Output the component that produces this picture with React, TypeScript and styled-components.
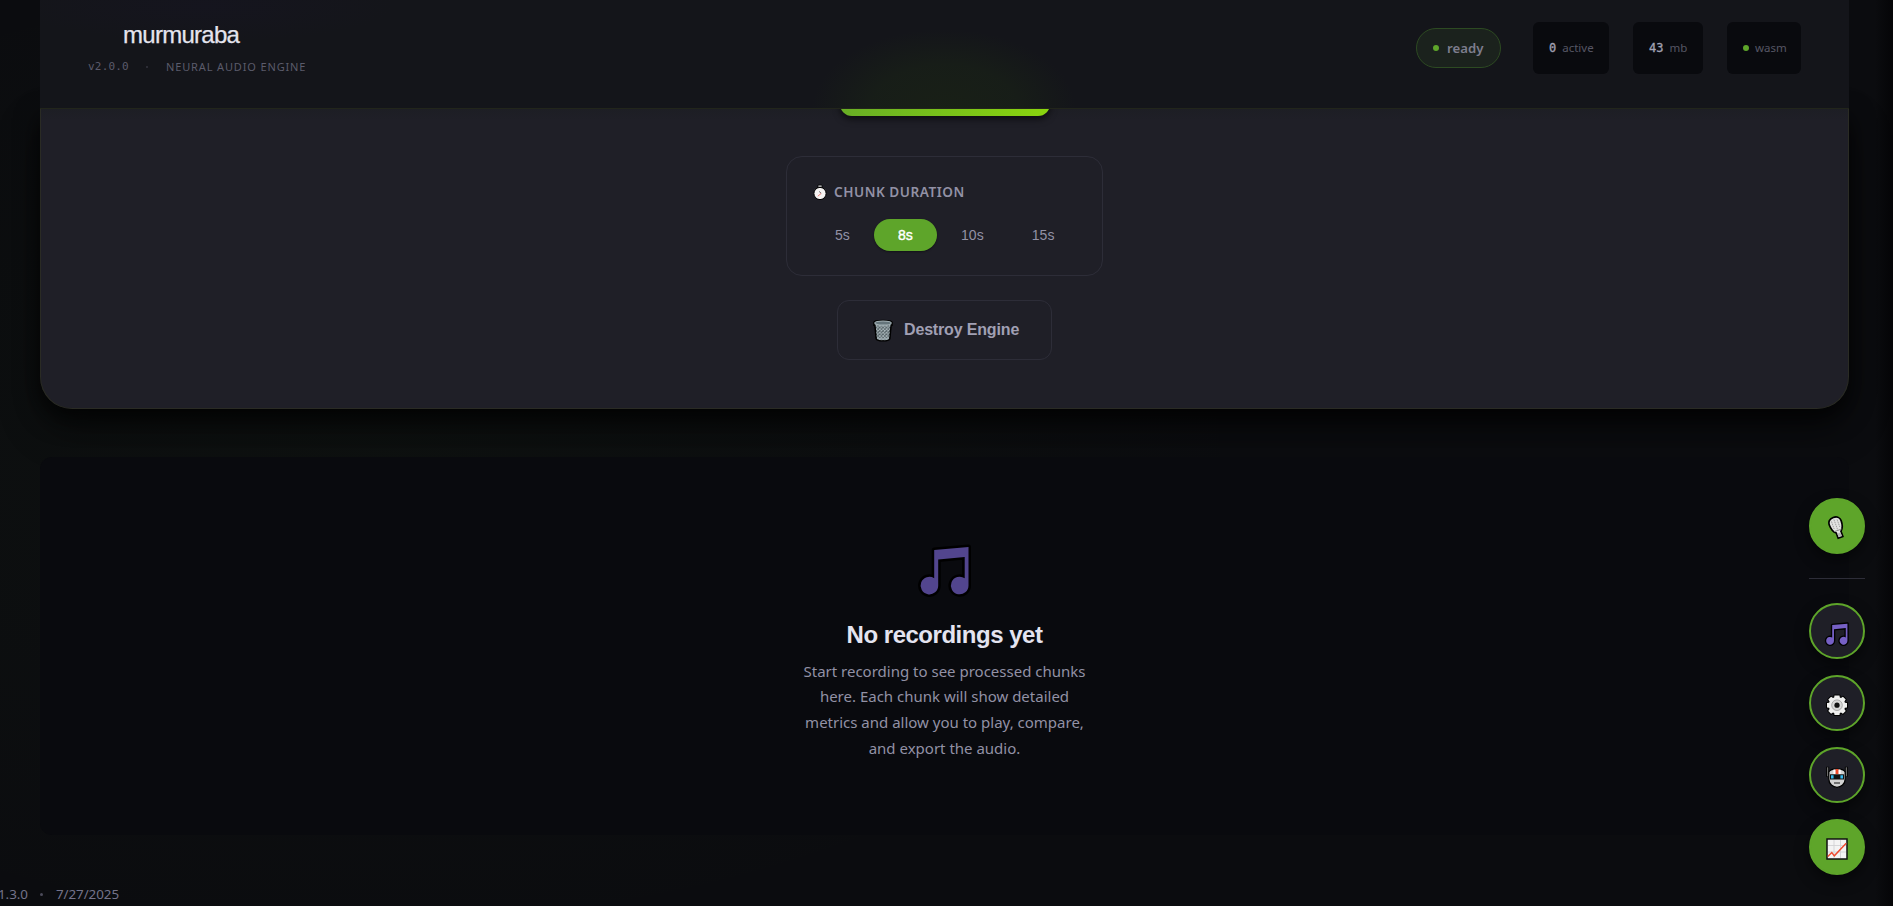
import React from "react";
import styled, { createGlobalStyle, css } from "styled-components";

const UI = `"Noto Sans", "Open Sans", sans-serif`;
const HEAD = `"Liberation Sans", Arial, sans-serif`;
const MONO = `"DejaVu Sans Mono", "Liberation Mono", monospace`;

const GlobalStyle = createGlobalStyle`
  *, *::before, *::after { box-sizing: border-box; }
  html, body { margin: 0; background: #0a0b0e; }
  body { overflow: hidden; font-family: ${UI}; }
  button { border: 0; background: none; margin: 0; padding: 0; }
  svg { display: block; }
`;

const Page = styled.div`
  position: relative;
  height: 906px;
  padding: 0 44px 0 40px;
  overflow: hidden;
  display: flex;
  flex-direction: column;
  background:
    linear-gradient(270deg, #050507 0, rgba(5, 5, 7, 0) 18px),
    radial-gradient(ellipse 900px 500px at 20% 50%, rgba(93, 163, 41, 0.03), transparent),
    #0b0c0f;
`;

const Header = styled.header`
  position: relative;
  z-index: 2;
  flex: none;
  height: 109px;
  padding: 0 48px;
  display: flex;
  justify-content: space-between;
  border-bottom: 1px solid #22251b;
  background:
    radial-gradient(ellipse 132px 80px at 904px 109px, rgba(30, 44, 18, 0.46) 0, rgba(29, 44, 20, 0.36) 55%, transparent 100%),
    radial-gradient(ellipse 190px 36px at 165px 6px, rgba(24, 20, 42, 0.26), transparent),
    #14151a;
`;

const Brand = styled.div`
  padding-top: 20px;
`;

const Logo = styled.h1`
  margin: 0 0 0 35px;
  font: 400 24px/30px ${HEAD};
  letter-spacing: -0.72px;
  color: #e4e4ee;
  -webkit-text-stroke: 0.25px #e4e4ee;
`;

const Tagline = styled.div`
  display: flex;
  align-items: center;
  height: 16px;
  margin-top: 9px;
  color: #5b5b6b;
`;

const Version = styled.span`
  width: 58px;
  font: 11px/16px ${MONO};
  letter-spacing: 0.2px;
`;

const TagDot = styled.i`
  width: 2px;
  height: 2px;
  border-radius: 50%;
  background: #34343f;
  margin-right: 18px;
`;

const Engine = styled.span`
  font: 11px/16px ${UI};
  letter-spacing: 0.86px;
`;

const Status = styled.div`
  display: flex;
  align-items: flex-start;
  padding-top: 22px;
`;

const Dot = styled.i`
  flex: none;
  width: 6px;
  height: 6px;
  border-radius: 50%;
  background: #5ea52a;
`;

const Ready = styled.div`
  width: 85px;
  height: 40px;
  margin: 6px 32px 0 0;
  padding-left: 16px;
  display: flex;
  align-items: center;
  gap: 8px;
  border: 1px solid #2d4a22;
  border-radius: 20px;
  background: #1b221d;
  color: #7d7d8d;
  font: 600 13.2px/18px ${UI};
`;

const Stat = styled.div<{ $w: number }>`
  width: ${(p) => p.$w}px;
  height: 52px;
  padding-left: 16px;
  display: flex;
  align-items: center;
  gap: 6px;
  border-radius: 6px;
  background: #090a0e;
  color: #565664;
  font: 11.5px/16px ${UI};
  & + & { margin-left: 24px; }
  b {
    font: 400 12px/16px ${MONO};
    -webkit-text-stroke: 0.3px #a2a2b4;
    color: #a2a2b4;
  }
`;

const Engines = styled.section`
  flex: none;
  width: 1809px;
  height: 301px;
  margin-top: -1px;
  border: 1px solid #2a2b24;
  border-top: 0;
  border-radius: 0 0 32px 32px;
  background: linear-gradient(180deg, #1d1e24 0, #1f1f27 12px);
  box-shadow: 0 10px 24px rgba(0, 0, 0, 0.75), 0 20px 44px rgba(0, 0, 0, 0.32);
  display: flex;
  flex-direction: column;
  align-items: center;
`;

const RecordEdge = styled.div`
  flex: none;
  width: 210px;
  height: 8px;
  &::before {
    content: "";
    display: block;
    height: 40px;
    margin-top: -32px;
    border-radius: 12px;
    background: linear-gradient(90deg, #68ae25, #8ad50e);
    box-shadow: 0 3px 7px rgba(0, 0, 0, 0.6);
  }
`;

const Durations = styled.div`
  flex: none;
  width: 317px;
  height: 120px;
  margin-top: 40px;
  padding: 25px 24px 24px;
  border: 1px solid #2d2d38;
  border-radius: 16px;
`;

const DurationLabel = styled.div`
  display: flex;
  align-items: center;
  gap: 6px;
  height: 20px;
  padding-left: 2px;
  font: 600 13.6px/20px ${UI};
  letter-spacing: 0.52px;
  color: #9291a5;
`;

const Options = styled.div`
  display: flex;
  margin-top: 17px;
`;

const Option = styled.button<{ $on?: boolean }>`
  height: 32px;
  padding: 0 24px;
  border-radius: 16px;
  font: 14px/32px ${HEAD};
  letter-spacing: 0.08px;
  color: #9291a5;
  ${(p) => p.$on && css`
    background: #5ea52a;
    color: #fff;
    -webkit-text-stroke: 0.4px #fff;
    box-shadow: 0 1px 2px rgba(0, 0, 0, 0.4);
  `}
`;

const Destroy = styled.button`
  flex: none;
  width: 215px;
  height: 60px;
  margin-top: 24px;
  border: 1px solid #2d2d38;
  border-radius: 12px;
  padding-left: 35px;
  display: flex;
  align-items: center;
  gap: 11px;
  font: 700 16px/24px ${HEAD};
  letter-spacing: -0.16px;
  color: #a1a0b4;
`;

const Empty = styled.section`
  flex: none;
  width: 1809px;
  height: 378px;
  margin-top: 48px;
  padding-top: 84px;
  border-radius: 12px;
  background: #090a0e;
  display: flex;
  flex-direction: column;
  align-items: center;
  h2 {
    margin: 25px 0 0;
    font: 700 24px/30px ${HEAD};
    letter-spacing: -0.48px;
    color: #e4e4f0;
  }
  p {
    margin: 8.500px 0 0;
    text-align: center;
    font: 15px/25.8px ${UI};
    color: #9291a5;
    white-space: pre-line;
  }
`;

const Footer = styled.footer`
  display: flex;
  align-items: center;
  height: 20px;
  margin: 49px 0 0 -42px;
  color: #74738a;
  font: 13.4px/20px ${UI};
  letter-spacing: -0.05px;
  i {
    width: 3px;
    height: 3px;
    margin: 1px 13px 0 12px;
    border-radius: 50%;
    background: #4c4b5a;
  }
`;

const Dock = styled.nav`
  position: absolute;
  z-index: 3;
  left: 1809px;
  top: 498px;
  width: 56px;
  display: flex;
  flex-direction: column;
  gap: 16px;
`;

const Fab = styled.button<{ $solid?: boolean }>`
  width: 56px;
  height: 56px;
  border-radius: 50%;
  border: 2px solid #5ea52a;
  background: ${(p) => (p.$solid ? "#5ea52a" : "#1f1f27")};
  box-shadow: 0 6px 14px rgba(0, 0, 0, 0.5);
  display: flex;
  align-items: center;
  justify-content: center;
  padding-top: 3px;
`;

const Divider = styled.hr`
  width: 56px;
  height: 1px;
  margin: 8px 0;
  border: 0;
  background: #2d2d38;
`;

const Note = ({ size, color, edge = 5 }: { size: number; color: string; edge?: number }) => (
  <svg width={size} height={size} viewBox="0 0 54 54" overflow="visible">
    <path
      d="M16.200 9 50.500 6V44.500a8.800 8.800 0 1 1-3.800-7.200V16L20.200 18.600V44.500a8.800 8.800 0 1 1-4-7.300Z"
      fill={color} stroke="#000" strokeWidth={edge} paintOrder="stroke" strokeLinejoin="round"
    />
  </svg>
);

const Stopwatch = () => (
  <svg width="15" height="16" viewBox="0 0 15 16">
    <path d="M5 1h4v3H5z" fill="#a9a9ad" stroke="#000" strokeWidth=".7" />
    <circle cx="7" cy="9.500" r="6.100" fill="#f5f3f3" stroke="#000" />
    <path d="m6.200 7.500 2 1.900" stroke="#333" strokeWidth=".8" />
    <path d="m8.200 9.400-3.400 2.800" stroke="#ee6257" strokeWidth=".8" />
  </svg>
);

const Bin = () => (
  <svg width="20" height="23" viewBox="0 0 20 23">
    <defs>
      <pattern id="mesh" width="3.400" height="3.400" patternUnits="userSpaceOnUse">
        <path d="M0 0l3.400 3.400M3.400 0L0 3.400" stroke="#a6b3b7" strokeWidth=".95" />
      </pattern>
    </defs>
    <path d="M1 3.200C1 1 19 1 19 3.200v3l-1 .5-1.200 13C16.500 22.500 3.500 22.500 3.200 19.700L2 6.700l-1-.5Z" fill="#48555a" stroke="#000" strokeWidth="1.600" />
    <path d="M2.600 6h14.800L16 20c-1 1.800-11 1.800-12 0Z" fill="url(#mesh)" />
    <ellipse cx="10" cy="4.100" rx="8.200" ry="2.100" fill="#65757b" stroke="#a3b1b5" strokeWidth="1.200" />
    <path d="M4.200 19c2 1.300 9.600 1.300 11.600 0" stroke="#9aa8ad" strokeWidth="1.500" fill="none" />
  </svg>
);

const Mic = () => (
  <svg width="18" height="24" viewBox="0 0 18 24">
    <g transform="rotate(-20 9 12)">
      <path d="M9 .8C4.800.8 2.800 3.500 2.800 6.500c0 3.800.8 7.500 3.800 10V22h5v-5.500c3-2.500 3.800-6.200 3.800-10C15.400 3.500 13.200.8 9 .8Z" fill="#e2e2e2" stroke="#000" strokeWidth="1.700" />
      <path d="M6 4v8m3-9v12m3-11v8" stroke="#a0a0a0" strokeWidth=".9" strokeDasharray="1.500 .7" />
      <path d="M5 14.500h8" stroke="#888" strokeWidth=".8" />
      <path d="M7.400 17.500h3.400v3.500H7.400z" fill="#b5b5b5" />
    </g>
  </svg>
);

const Gear = () => (
  <svg width="22" height="22" viewBox="0 0 22 22">
    <path
      d="m8.500 1.500 5 0 .3 2.100 1.200.5 1.900-1.300 2.800 2.800-1.300 1.900.5 1.200 2.100.3v4.500l-2.100.3-.5 1.200 1.300 1.900-2.800 2.800-1.900-1.300-1.200.5-.3 2.100h-5l-.3-2.100-1.200-.5-1.900 1.300-2.800-2.800 1.300-1.900-.5-1.200L1 13.500V9l2.100-.3.500-1.200-1.300-1.900 2.800-2.800L7 4.100l1.200-.5Z"
      fill="#eee" stroke="#000" strokeWidth="2" paintOrder="stroke" strokeLinejoin="round"
    />
    <circle cx="11" cy="11.200" r="5.300" fill="#d8d8d8" stroke="#999" strokeWidth=".8" />
    <circle cx="11" cy="11.200" r="2.600" fill="#111" />
  </svg>
);

const Robot = () => (
  <svg width="22" height="22" viewBox="0 0 22 22">
    <path d="M1.700.8v10M20.300.8v10" stroke="#000" strokeWidth="3" />
    <path d="M1.700 1.300v9M20.300 1.300v9" stroke="#858585" strokeWidth="1" />
    <path d="M2.800 6C5 1.800 17 1.800 19.200 6v7c0 5-4.200 8.300-8.200 8.300S2.800 18 2.800 13Z" fill="#d2d2d2" stroke="#000" strokeWidth="1.300" />
    <path d="M7.400 3.500H9.600V8H7.400zM12.400 3.500h2.200V8h-2.200z" fill="#fff" />
    <path d="M9.600 3h2.800v5H9.600z" fill="#f04a2b" />
    <path d="M4 8.300h14v5.200H4z" fill="#111" />
    <path d="M5 9.300h2.600v3.200H5zM14.400 9.300H17v3.200h-2.600z" fill="#35b9ef" />
    <path d="M8 17h6" stroke="#333" strokeWidth="1.200" />
  </svg>
);

const Chart = () => (
  <svg width="22" height="22" viewBox="0 0 22 22">
    <path d="M1 1h20v20H1z" fill="#f4f4f4" stroke="#111" strokeWidth="1.500" />
    <path d="M2 7.500h18M2 14h18M8 2v18M14.500 2v18" stroke="#d2d2d5" strokeWidth=".9" />
    <path d="m1.800 18.500 4-4 2.500 3.300L20.200 5.200" stroke="#f0492e" strokeWidth="1.400" fill="none" />
  </svg>
);

export default function App() {
  return (
    <>
      <GlobalStyle />
      <Page>
        <Header>
          <Brand>
            <Logo>murmuraba</Logo>
            <Tagline>
              <Version>v2.0.0</Version>
              <TagDot />
              <Engine>NEURAL AUDIO ENGINE</Engine>
            </Tagline>
          </Brand>
          <Status>
            <Ready><Dot />ready</Ready>
            <Stat $w={76}><b>0</b>active</Stat>
            <Stat $w={70}><b>43</b>mb</Stat>
            <Stat $w={74}><Dot />wasm</Stat>
          </Status>
        </Header>
        <Engines>
          <RecordEdge />
          <Durations>
            <DurationLabel><Stopwatch />CHUNK DURATION</DurationLabel>
            <Options>
              <Option>5s</Option>
              <Option $on>8s</Option>
              <Option>10s</Option>
              <Option>15s</Option>
            </Options>
          </Durations>
          <Destroy><Bin />Destroy Engine</Destroy>
        </Engines>
        <Empty>
          <Note size={54} color="#52458e" />
          <h2>No recordings yet</h2>
          <p>{"Start recording to see processed chunks\nhere. Each chunk will show detailed\nmetrics and allow you to play, compare,\nand export the audio."}</p>
        </Empty>
        <Footer>1.3.0<i />7/27/2025</Footer>
        <Dock>
          <Fab $solid><Mic /></Fab>
          <Divider />
          <Fab><Note size={24} color="#7660c5" edge={6} /></Fab>
          <Fab><Gear /></Fab>
          <Fab><Robot /></Fab>
          <Fab $solid><Chart /></Fab>
        </Dock>
      </Page>
    </>
  );
}
